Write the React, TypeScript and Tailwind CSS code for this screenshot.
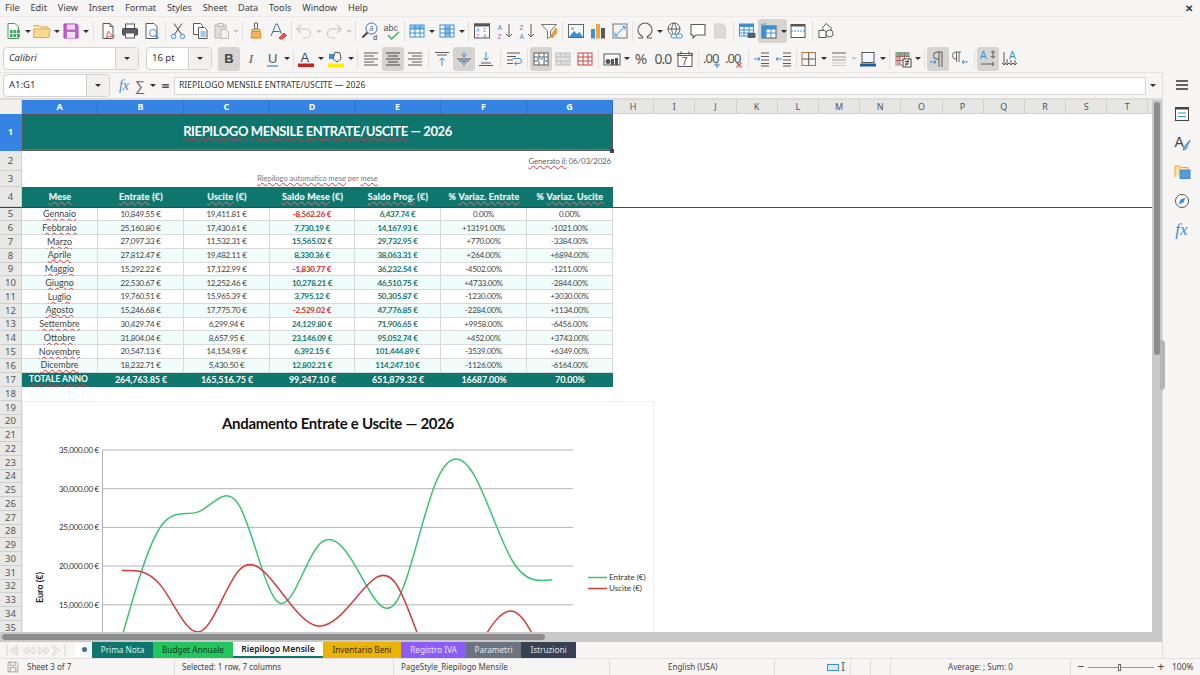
import type { ReactNode } from "react";

const UI = "font-['Noto_Sans',sans-serif]";
const CELL = "font-['Lato',sans-serif]";

const MENU = ["File", "Edit", "View", "Insert", "Format", "Styles", "Sheet", "Data", "Tools", "Window", "Help"];
const COLS = ["w-[76px]", "w-[86px]", "w-[86px]", "w-[85px]", "w-[86px]", "w-[86px]", "w-[86px]"];
const OTHER_COLS = ["H", "I", "J", "K", "L", "M", "N", "O", "P", "Q", "R", "S", "T"];

const ROWS = [
  ["Gennaio", "10,849.55 €", "19,411.81 €", "-8,562.26 €", "6,437.74 €", "0.00%", "0.00%"],
  ["Febbraio", "25,160.80 €", "17,430.61 €", "7,730.19 €", "14,167.93 €", "+13191.00%", "-1021.00%"],
  ["Marzo", "27,097.33 €", "11,532.31 €", "15,565.02 €", "29,732.95 €", "+770.00%", "-3384.00%"],
  ["Aprile", "27,812.47 €", "19,482.11 €", "8,330.36 €", "38,063.31 €", "+264.00%", "+6894.00%"],
  ["Maggio", "15,292.22 €", "17,122.99 €", "-1,830.77 €", "36,232.54 €", "-4502.00%", "-1211.00%"],
  ["Giugno", "22,530.67 €", "12,252.46 €", "10,278.21 €", "46,510.75 €", "+4733.00%", "-2844.00%"],
  ["Luglio", "19,760.51 €", "15,965.39 €", "3,795.12 €", "50,305.87 €", "-1230.00%", "+3030.00%"],
  ["Agosto", "15,246.68 €", "17,775.70 €", "-2,529.02 €", "47,776.85 €", "-2284.00%", "+1134.00%"],
  ["Settembre", "30,429.74 €", "6,299.94 €", "24,129.80 €", "71,906.65 €", "+9958.00%", "-6456.00%"],
  ["Ottobre", "31,804.04 €", "8,657.95 €", "23,146.09 €", "95,052.74 €", "+452.00%", "+3743.00%"],
  ["Novembre", "20,547.13 €", "14,154.98 €", "6,392.15 €", "101,444.89 €", "-3539.00%", "+6349.00%"],
  ["Dicembre", "18,232.71 €", "5,430.50 €", "12,802.21 €", "114,247.10 €", "-1126.00%", "-6164.00%"],
];
const HEADERS = [
  ["", "Mese", ""],
  ["", "Entrate", " (€)"],
  ["", "Uscite", " (€)"],
  ["", "Saldo Mese", " (€)"],
  ["", "Saldo Prog.", " (€)"],
  ["% ", "Variaz. Entrate", ""],
  ["% ", "Variaz. Uscite", ""],
];
const TOTALS = ["264,763.85 €", "165,516.75 €", "99,247.10 €", "651,879.32 €", "16687.00%", "70.00%"];
const TABS = [
  { label: "Prima Nota", cls: "w-[61px] bg-[#0f766e] text-[#d6efec]" },
  { label: "Budget Annuale", cls: "w-[80px] bg-[#22c55e] text-[#0b3d20]" },
  { label: "Riepilogo Mensile", cls: "w-[90px] bg-white text-[#222] font-semibold text-[8.500px] border-b-2 border-[#0f766e]" },
  { label: "Inventario Beni", cls: "w-[78px] bg-[#eab308] text-[#3a2c02]" },
  { label: "Registro IVA", cls: "w-[65px] bg-[#8b5cf6] text-[#ece4ff]" },
  { label: "Parametri", cls: "w-[55px] bg-[#6b7280] text-[#e6e8ea]" },
  { label: "Istruzioni", cls: "w-[55px] bg-[#374151] text-[#dfe3e8]" },
];

const ENTRATE = [10849.55, 25160.8, 27097.33, 27812.47, 15292.22, 22530.67, 19760.51, 15246.68, 30429.74, 31804.04, 20547.13, 18232.71];
const USCITE = [19411.81, 17430.61, 11532.31, 19482.11, 17122.99, 12252.46, 15965.39, 17775.7, 6299.94, 8657.95, 14154.98, 5430.5];
const Y_TICKS = [["35,000.00 €", 450], ["30,000.00 €", 488.7], ["25,000.00 €", 527.4], ["20,000.00 €", 566], ["15,000.00 €", 604.8]] as const;

// natural cubic spline through the monthly values, same as the chart's smooth lines
function splinePath(values: number[]) {
  const step = (552 - 122) / 11;
  const ys = values.map((v) => 566 - ((v - 20000) * 38.7) / 5000);
  const n = ys.length;
  const m = new Array(n).fill(0);
  const c = new Array(n).fill(0);
  const d = new Array(n).fill(0);
  for (let i = 1; i < n - 1; i++) {
    const rhs = (6 * (ys[i + 1] - 2 * ys[i] + ys[i - 1])) / (step * step);
    const denom = 4 - c[i - 1];
    c[i] = 1 / denom;
    d[i] = (rhs - d[i - 1]) / denom;
  }
  for (let i = n - 2; i > 0; i--) m[i] = d[i] - c[i] * m[i + 1];
  let path = `M122 ${ys[0]}`;
  for (let i = 0; i < n - 1; i++) {
    const x0 = 122 + i * step;
    const slope = (ys[i + 1] - ys[i]) / step;
    const d0 = slope - (step * (2 * m[i] + m[i + 1])) / 6;
    const d1 = slope + (step * (m[i] + 2 * m[i + 1])) / 6;
    path += ` C${x0 + step / 3} ${ys[i] + (d0 * step) / 3} ${x0 + (2 * step) / 3} ${ys[i + 1] - (d1 * step) / 3} ${x0 + step} ${ys[i + 1]}`;
  }
  return path;
}

function Ic({ children, s = 20 }: { children: ReactNode; s?: number }) {
  return (
    <svg width={s} height={s} viewBox="0 0 20 20" fill="none" stroke="#5a5a5a" strokeWidth={1}>
      {children}
    </svg>
  );
}

function B({ children, active, w = "w-[22px]" }: { children: ReactNode; active?: boolean; w?: string }) {
  return (
    <div className={`${w} h-[24px] shrink-0 flex items-center justify-center rounded-[3px] ${active ? "bg-[#d6d4d1]" : ""}`}>
      {children}
    </div>
  );
}

function Arrow({ dim }: { dim?: boolean }) {
  return <span className={`block w-0 h-0 border-x-[3px] border-t-[3px] border-x-transparent ${dim ? "border-t-[#c8c8c8]" : "border-t-[#2e2e2e]"}`} />;
}

function D({ w = "w-[8px]", dim }: { w?: string; dim?: boolean }) {
  return (
    <div className={`${w} h-[24px] shrink-0 flex items-center justify-center`}>
      <Arrow dim={dim} />
    </div>
  );
}

function S({ w }: { w: string }) {
  return (
    <div className={`${w} h-[24px] shrink-0 flex items-center justify-center`}>
      <span className="block w-px h-[20px] bg-[#e2e1df]" />
    </div>
  );
}

function GridIcon({ line = "#3b8fd6", fill, fillRow }: { line?: string; fill?: string; fillRow?: boolean }) {
  return (
    <Ic>
      <rect x="3" y="4" width="14" height="12" fill="#fff" stroke={line} />
      {fill && (fillRow ? <rect x="3" y="4" width="14" height="4" fill={fill} stroke="none" /> : <rect x="8" y="4" width="5" height="12" fill={fill} stroke="none" />)}
      <path d="M3 8h14M3 12h14M8 4v12M13 4v12" stroke={line} />
    </Ic>
  );
}

function Lines({ rows, active }: { rows: number[][]; active?: boolean }) {
  return (
    <Ic>
      {rows.map(([a, b], i) => (
        <path key={i} d={`M${a} ${4 + i * 3}H${b}`} stroke={active ? "#444" : "#5a5a5a"} />
      ))}
    </Ic>
  );
}

function VAlign({ mode }: { mode: "top" | "mid" | "bot" }) {
  return (
    <Ic>
      {mode === "top" && <path d="M3 3.500h14M5 6h10" />}
      {mode === "mid" && <path d="M3 10h14M5 12h10" />}
      {mode === "bot" && <path d="M3 16.500h14M5 14h10" />}
      {mode === "top" && <path d="M10 17V9M7.500 11.500 10 9l2.500 2.500" stroke="#3b8fd6" />}
      {mode === "mid" && <path d="M10 3v5M7.500 5.500 10 8l2.500-2.500M10 17v-4M7.500 14.500 10 12.500l2.500 2" stroke="#3b8fd6" />}
      {mode === "bot" && <path d="M10 3v8M7.500 8.500 10 11l2.500-2.500" stroke="#3b8fd6" />}
    </Ic>
  );
}

function Toolbar1() {
  return (
    <div className="h-[28px] flex items-center pl-[2px] shrink-0">
      <B><Ic><path d="M5 2.500h7l3.500 3.500v11.500H5z" fill="#fff" stroke="#3f9c5c" /><rect x="7" y="9" width="10" height="7" fill="#43a565" stroke="none" /><path d="M10 9v7M13.500 9v7M7 12.500h10" stroke="#d8f0e0" /></Ic></B>
      <D w="w-[7px]" />
      <B><Ic><path d="M2 6V4.500h5l1.500 1.500H16v2" fill="#fde3a7" stroke="#e9a63f" /><path d="M1.500 16.500 2 8h16l-1 8.500z" fill="#fcd98e" stroke="#e9a63f" /></Ic></B>
      <D w="w-[7px]" />
      <B><Ic><path d="M3 3h12.500L17 4.500V17H3z" fill="#c162cf" stroke="#a845b8" /><rect x="6" y="3.500" width="8" height="5" fill="#f4def7" stroke="none" /><rect x="6" y="11" width="8" height="6" fill="#f4def7" stroke="none" /></Ic></B>
      <D />
      <S w="w-[7px]" />
      <B><Ic><path d="M5 2.500h7l3 3v12H5z" fill="#fff" /><path d="M12 2.500v3h3" /><path d="M8 17c2-4 2-7 2.500-7s.5 4 6 5c-3 0-6 .5-8.500 2z" stroke="#d9534f" fill="none" /></Ic></B>
      <B><Ic><rect x="5.500" y="3" width="9" height="5" fill="#fff" /><rect x="2.500" y="7.500" width="15" height="6.500" rx="1" fill="#55606b" stroke="#444" /><rect x="5.500" y="12" width="9" height="5" fill="#fff" /></Ic></B>
      <B><Ic><path d="M4 2.500h8l3 3v12H4z" fill="#fff" /><circle cx="11" cy="12" r="3.500" stroke="#3b8fd6" /><path d="m13.500 14.500 3 3" stroke="#3b8fd6" strokeWidth="1.500" /></Ic></B>
      <S w="w-[4px]" />
      <B><Ic><g stroke="#3b8fd6"><circle cx="5.500" cy="15.500" r="2.200" /><circle cx="14.500" cy="15.500" r="2.200" /></g><path d="M13.500 13.500 6 2.500M6.500 13.500 14 2.500" stroke="#444" /></Ic></B>
      <B><Ic><path d="M3.500 2.500h7l2 2v9h-9z" fill="#fff" /><path d="M8.500 6.500h6l2.500 2.500v8.500H8.500z" fill="#fff" /><path d="M10.500 11h5M10.500 13h5M10.500 15h5" stroke="#3b8fd6" /></Ic></B>
      <B><Ic><g stroke="#b9b9b9"><rect x="3" y="4" width="11" height="13" fill="#ddd" /><rect x="6" y="2.500" width="5" height="3" fill="#eee" /><path d="M9 8.500h5l2.500 2.500v6.500H9z" fill="#f2f2f2" /></g></Ic></B>
      <D w="w-[6px]" dim />
      <S w="w-[6px]" />
      <B><Ic><path d="M8.500 2h3v6h-3z" stroke="#666" /><path d="M6 8.500h8v2H6z" fill="#fbd38d" stroke="#de8a2c" /><path d="M6 10.500h8l1 6.500H5z" fill="#f9b35c" stroke="#de8a2c" /></Ic></B>
      <B><Ic><path d="M3 15 8 3h1.500l4 10M5 10.500h6.500" stroke="#3b6ea5" /><path d="m11 17 5-5 2.500 2.500-4 3.500h-2.500z" fill="#e2574c" stroke="#c9433a" /></Ic></B>
      <S w="w-[4px]" />
      <B><Ic><path d="M7 4 3 8l4 4M3.500 8H12a4.500 4.500 0 0 1 0 9H9" stroke="#c9c9c9" strokeWidth="1.200" /></Ic></B>
      <D dim />
      <B><Ic><path d="m13 4 4 4-4 4M16.500 8H8a4.500 4.500 0 0 0 0 9h3" stroke="#c9c9c9" strokeWidth="1.200" /></Ic></B>
      <D w="w-[7px]" dim />
      <S w="w-[7px]" />
      <B><Ic><circle cx="11.500" cy="7.500" r="5.500" fill="#fff" stroke="#3b6ea5" /><path d="m7.500 11.500-5 5" stroke="#444" strokeWidth="2" /><text x="9" y="10" fontSize="8" fill="#3b6ea5" stroke="none">a</text><text x="13" y="18.500" fontSize="7" fill="#444" stroke="none">d</text></Ic></B>
      <B><Ic><text x="1.500" y="10" fontSize="9" fill="#555" stroke="none" fontFamily="Liberation Sans">abc</text><path d="m6 14 3.500 4L17 11" stroke="#45a864" strokeWidth="1.400" /></Ic></B>
      <S w="w-[3px]" />
      <B><GridIcon fill="#7fbbe8" fillRow /></B>
      <D />
      <B><GridIcon fill="#7fbbe8" /></B>
      <D />
      <S w="w-[5px]" />
      <B><Ic><rect x="2.500" y="3" width="15" height="14" fill="#fff" /><rect x="2.500" y="3" width="15" height="2" fill="#555" /><text x="4" y="10.500" fontSize="5.500" fill="#3b8fd6" stroke="none">A</text><text x="11" y="10.500" fontSize="5.500" fill="#c05cc9" stroke="none">Z</text><text x="4" y="16.500" fontSize="5.500" fill="#c05cc9" stroke="none">Z</text><text x="11" y="16.500" fontSize="5.500" fill="#3b8fd6" stroke="none">A</text></Ic></B>
      <div className="w-px shrink-0" />
      <B><Ic><text x="2.500" y="8.500" fontSize="7" fill="#3b8fd6" stroke="none">A</text><text x="2.500" y="18" fontSize="7" fill="#c05cc9" stroke="none">Z</text><path d="M14 3v13M11 13l3 3 3-3" /></Ic></B>
      <B><Ic><text x="2.500" y="8.500" fontSize="7" fill="#c05cc9" stroke="none">Z</text><text x="2.500" y="18" fontSize="7" fill="#3b8fd6" stroke="none">A</text><path d="M14 3v13M11 13l3 3 3-3" /></Ic></B>
      <B><Ic><path d="M2.500 3.500h15L11.500 10v6l-3 1.500V10z" fill="#fff" stroke="#777" /><path d="m17 7-5 8 1 2 4.500-5z" fill="#f0a63c" stroke="#e08e1f" /></Ic></B>
      <S w="w-[5px]" />
      <B><Ic><rect x="2.500" y="3.500" width="15" height="13" fill="#f3f8fd" stroke="#666" /><circle cx="6.500" cy="7.500" r="1.500" fill="#f0a63c" stroke="none" /><path d="m3 16 5-6 3 3 2.500-2 3.500 5z" fill="#3b8fd6" stroke="none" /></Ic></B>
      <B><Ic><rect x="3" y="8" width="4" height="9.500" fill="#3b8fd6" stroke="none" /><rect x="8" y="3" width="4" height="14.500" fill="#f0a63c" stroke="none" /><rect x="13" y="7" width="4" height="10.500" fill="#5a5a5a" stroke="none" /></Ic></B>
      <B><Ic><rect x="3" y="3" width="14" height="14" fill="#f4f4f4" stroke="#777" /><path d="M12 5.500h3v3M15 5.500 5.500 14.500M5 11.500v3.500h3" stroke="#3b8fd6" /></Ic></B>
      <S w="w-[3px]" />
      <B><Ic><path d="M3 17h4.500v-1.500C4.500 14 3 11.500 3 9a7 7 0 0 1 14 0c0 2.500-1.500 5-4.500 6.500V17H17" strokeWidth="1.100" /></Ic></B>
      <D />
      <B><Ic><circle cx="9" cy="8" r="6" fill="#fff" /><path d="M3 8h12M9 2c-3 3-3 9 0 12M9 2c3 3 3 9 0 12" /><rect x="6" y="13" width="6" height="4" rx="2" fill="#fff" stroke="#3b8fd6" /><rect x="11" y="13" width="6.500" height="4" rx="2" fill="#fff" stroke="#3b8fd6" /></Ic></B>
      <div className="w-px shrink-0" />
      <B><Ic><path d="M3 3.500h14v10.500h-9l-3 3v-3H3z" fill="#fff" strokeWidth="1.100" /></Ic></B>
      <B><Ic><path d="M4.500 3h8l3 3v11h-11z" fill="#dadada" stroke="#cfcfcf" /></Ic></B>
      <S w="w-[5px]" />
      <B><Ic><rect x="2.500" y="3" width="14" height="12" fill="#fff" stroke="#3b8fd6" /><rect x="2.500" y="3" width="14" height="3" fill="#3b8fd6" stroke="none" /><path d="M2.500 9h14M2.500 12h14M7 3v12M12 3v12" stroke="#3b8fd6" /><rect x="10.500" y="12" width="8" height="5" rx="1" fill="#55606b" stroke="none" /></Ic></B>
      <div className="flex rounded-[3px] bg-[#d6d4d1]">
        <B><Ic><rect x="3" y="5" width="14" height="12" fill="#fff" stroke="#555" /><rect x="3" y="5" width="14" height="3.500" fill="#3b8fd6" stroke="none" /><rect x="3" y="5" width="4" height="12" fill="#3b8fd6" stroke="none" /><path d="M3 12h14M7 8v9M12 8v9" stroke="#3b8fd6" /><path d="M2 3l3 2M6 2v2" stroke="#3b8fd6" /></Ic></B>
        <D w="w-[7px]" />
      </div>
      <B><Ic><rect x="3" y="3.500" width="14" height="13" fill="#fff" stroke="#555" /><rect x="3" y="3.500" width="14" height="2" fill="#555" stroke="none" /><path d="M3 10h14" stroke="#3b8fd6" strokeDasharray="2 1" /></Ic></B>
      <S w="w-[6px]" />
      <B><Ic><rect x="3" y="9.500" width="7" height="7" fill="#fff" /><path d="m10 2.500 6 5-5 4-5-4z" fill="#fff" /><circle cx="13.500" cy="12.500" r="3.500" fill="#fff" /></Ic></B>
    </div>
  );
}

function Toolbar2() {
  return (
    <div className={`h-[27px] flex items-center pl-[3px] shrink-0 ${UI}`}>
      <div className="w-[136px] h-[23px] flex bg-white border border-[#d3d2d0] rounded-[4px] text-[9.500px] text-[#333] overflow-hidden">
        <span className="flex-1 flex items-center pl-[5px] italic">Calibri</span>
        <span className="w-[23px] flex items-center justify-center bg-[#f1f0ee] border-l border-[#d3d2d0]"><Arrow /></span>
      </div>
      <div className="w-[7px] shrink-0" />
      <div className="w-[66px] h-[23px] flex bg-white border border-[#d3d2d0] rounded-[4px] text-[9.500px] text-[#333] overflow-hidden">
        <span className="flex-1 flex items-center pl-[5px]">16 pt</span>
        <span className="w-[23px] flex items-center justify-center bg-[#f1f0ee] border-l border-[#d3d2d0]"><Arrow /></span>
      </div>
      <div className="w-[6px] shrink-0" />
      <B active><span className="text-[13px] font-bold text-[#444] font-['Liberation_Sans',sans-serif]">B</span></B>
      <B><span className="text-[13px] italic text-[#555] font-['Liberation_Serif',serif]">I</span></B>
      <B w="w-[21px]"><Ic><text x="5" y="14" fontSize="13" fill="#555" stroke="none" fontFamily="Liberation Sans">U</text><path d="M4 17h11" stroke="#3b8fd6" strokeWidth="1.300" /></Ic></B>
      <D />
      <S w="w-[4px]" />
      <B><Ic><text x="4.500" y="13" fontSize="13" fill="#444" stroke="none" fontFamily="Liberation Sans">A</text><rect x="2" y="14.500" width="16" height="3.500" fill="#c9211e" stroke="none" /></Ic></B>
      <D />
      <B><Ic><path d="M3 5h7v5H3z" fill="#3b8fd6" stroke="none" /><path d="m9 3 5 1 1 6-4 3-4-3z" fill="#fff" stroke="#555" /><rect x="2" y="14.500" width="16" height="3.500" fill="#fff200" stroke="none" /></Ic></B>
      <D />
      <S w="w-[5px]" />
      <B><Lines rows={[[3, 17], [3, 13], [3, 17], [3, 13], [3, 17]]} /></B>
      <B active><Lines active rows={[[3, 17], [5, 15], [3, 17], [5, 15], [3, 17]]} /></B>
      <B><Lines rows={[[3, 17], [7, 17], [3, 17], [7, 17], [3, 17]]} /></B>
      <S w="w-[5px]" />
      <B><VAlign mode="top" /></B>
      <B active><VAlign mode="mid" /></B>
      <B><VAlign mode="bot" /></B>
      <S w="w-[6px]" />
      <B><Ic><path d="M3 4h13M3 7.500h9M3 11h6M3 14.500h6" /><path d="M9 9.500h6a2.500 2.500 0 0 1 0 5H11m1.500-2-2 2 2 2" stroke="#3b8fd6" /></Ic></B>
      <S w="w-[5px]" />
      <B active><Ic><rect x="3" y="4" width="14" height="12" fill="#fff" /><path d="M3 8h14M3 12h4M13 12h4M8 4v4M13 4v4M8 12v4M13 12v4" /><path d="M6 10h8M7.500 8.500 6 10l1.500 1.500M12.500 8.500 14 10l-1.500 1.500" stroke="#3b8fd6" /></Ic></B>
      <B><Ic><rect x="3" y="4" width="14" height="12" fill="#e3e3e3" stroke="#bbb" /><path d="M3 8h14M3 12h14M8 4v4M13 4v4M8 12v4M13 12v4" stroke="#bbb" /></Ic></B>
      <B><Ic><rect x="3" y="4" width="14" height="12" fill="#fff" stroke="#c9453f" /><path d="M3 8h14M8 4v12M13 4v12M3 12h14" stroke="#c9453f" /></Ic></B>
      <S w="w-[5px]" />
      <B><Ic><rect x="2" y="5" width="16" height="11" fill="#fff" stroke="#555" /><circle cx="6" cy="12.500" r="2.500" fill="#555" stroke="none" /><rect x="9" y="10" width="3" height="6" fill="#555" stroke="none" /><rect x="13" y="9" width="3" height="7" fill="#555" stroke="none" /></Ic></B>
      <D w="w-[7px]" />
      <B><span className="text-[15px] text-[#555] leading-none">%</span></B>
      <B><span className="text-[14px] text-[#555] leading-none tracking-[-1px]">0.0</span></B>
      <B><Ic><rect x="3" y="4.500" width="14" height="13" fill="#fff" /><path d="M3 4.500h14v2H3zM6 2.500v3M14 2.500v3" strokeWidth="1.200" /><text x="7" y="16" fontSize="10" fill="#444" stroke="none" fontFamily="Liberation Sans">7</text></Ic></B>
      <S w="w-[5px]" />
      <B><Ic><text x="1" y="14" fontSize="13" fill="#555" stroke="none" letterSpacing="-1">.00</text><path d="M15 13v6M12 16h6" stroke="#3b8fd6" strokeWidth="1.200" /></Ic></B>
      <B><Ic><text x="1" y="14" fontSize="13" fill="#555" stroke="none" letterSpacing="-1">.00</text><path d="m12.500 13.500 5 5M17.500 13.500l-5 5" stroke="#d9534f" strokeWidth="1.200" /></Ic></B>
      <S w="w-[6px]" />
      <B><Ic><path d="M9 4h8M9 7.500h8M9 11h8M9 14.500h8M9 17h8" /><path d="M2 10h6M6 8l2 2-2 2" stroke="#3b8fd6" /></Ic></B>
      <B><Ic><path d="M9 4h8M9 7.500h8M9 11h8M9 14.500h8M9 17h8" /><path d="M8 10H2M4 8l-2 2 2 2" stroke="#3b8fd6" /></Ic></B>
      <S w="w-[3px]" />
      <B><Ic><rect x="3" y="3.500" width="13.500" height="13" stroke="#b9763a" /><path d="M9.750 3.500v13M3 10h13.500" stroke="#555" /></Ic></B>
      <D />
      <B><Ic><path d="M3 4h14" stroke="#aaa" strokeWidth="2" /><path d="M3 8h14M3 11h14" stroke="#bbb" strokeWidth="1.300" /><path d="M3 14h14M3 16.500h14" stroke="#ccc" /></Ic></B>
      <D w="w-[7px]" dim />
      <B><Ic><rect x="4" y="3.500" width="12" height="10" fill="#f4f7fb" stroke="#555" /><rect x="2" y="14.500" width="16" height="3" fill="#1d5fa6" stroke="none" /></Ic></B>
      <D />
      <S w="w-[5px]" />
      <B><Ic><rect x="3" y="3.500" width="13" height="12.500" fill="#fff" stroke="#888" /><rect x="3" y="3.500" width="13" height="4" fill="#79b784" stroke="none" /><rect x="3" y="7.500" width="4" height="8" fill="#e9a39e" stroke="none" /><path d="M3 7.500h13M3 11.500h13M7 3.500v12.500M11.500 3.500v12.500" stroke="#a66" /><rect x="10" y="10" width="8" height="8" fill="#fff" stroke="#444" /><path d="M12 12.500h4M12 15h4M15.500 11l-3 6" stroke="#444" /></Ic></B>
      <D />
      <S w="w-[5px]" />
      <B active><Ic><path d="M14 3v15M11 3v15M14 3H9a3.500 3.500 0 0 0 0 7h2" /><path d="M2 13h6M6 11l2 2-2 2" stroke="#3b8fd6" /></Ic></B>
      <B><Ic><path d="M9 3v10M6.500 3v10M11 3H6a3.500 3.500 0 0 0 0 7h1" stroke="#666" /><path d="M18 13h-6M14 11l-2 2 2 2" stroke="#3b8fd6" /></Ic></B>
      <S w="w-[6px]" />
      <B active><Ic><text x="2" y="10" fontSize="10" fill="#3b8fd6" stroke="none" fontFamily="Liberation Sans">A</text><path d="M13 3h4M15 1.500V9M13 7l2 2 2-2M3 15h13M14 13l2 2-2 2" /></Ic></B>
      <B><Ic><text x="9" y="10" fontSize="10" fill="#3b8fd6" stroke="none" fontFamily="Liberation Sans">A</text><path d="M4 3v13M2 14l2 2 2-2M7 10v6M5 14l2 2 2-2M11 11v5M9 14l2 2 2-2M15 11v5M13 14l2 2 2-2" /></Ic></B>
    </div>
  );
}

function FormulaBar() {
  return (
    <div className={`h-[26px] flex items-center pl-[3px] shrink-0 border-t border-[#e6e5e3] ${UI}`}>
      <div className="w-[107px] h-[23px] flex bg-white border border-[#d3d2d0] rounded-[4px] text-[9.500px] text-[#333] overflow-hidden">
        <span className="flex-1 flex items-center pl-[5px]">A1:G1</span>
        <span className="w-[23px] flex items-center justify-center bg-[#f1f0ee] border-l border-[#d3d2d0]"><Arrow /></span>
      </div>
      <div className="w-[3px] shrink-0" />
      <span className="w-[22px] text-center text-[14px] italic text-[#3b8fd6] font-['Liberation_Serif',serif] shrink-0">fx</span>
      <span className="w-[10px] text-center text-[14px] text-[#666] shrink-0">∑</span>
      <D w="w-[16px]" />
      <span className="w-[9px] text-center text-[14px] text-[#555] font-bold shrink-0 leading-none">=</span>
      <div className="w-[4px] shrink-0" />
      <div className="w-[972px] h-[18px] bg-white border border-[#d8d7d5] flex items-center pl-[4px] text-[8.600px] text-[#333] shrink-0">
        RIEPILOGO MENSILE ENTRATE/USCITE — 2026
      </div>
      <D w="w-[14px]" />
    </div>
  );
}

function RowHead({ n, selected, h }: { n: number; selected?: boolean; h: string }) {
  return (
    <div className={`w-[22px] ${h} shrink-0 flex items-center justify-center pt-px text-[9.500px] border-b border-r ${UI} ${selected ? "bg-[#3584e4] text-white font-bold border-[#3584e4]" : "bg-[#e8e8e6] text-[#555] border-[#cfcfcd]"}`}>
      {n}
    </div>
  );
}

function Wavy({ children }: { children: ReactNode }) {
  return <span className="underline decoration-wavy decoration-[#d9363e] decoration-1 underline-offset-[1px]">{children}</span>;
}

function cellColor(col: number, value: string) {
  if (col === 3) return value.startsWith("-") ? "text-[#dc2626] font-bold" : "text-[#0f766e] font-bold";
  if (col === 4) return "text-[#0f766e] font-bold";
  return "text-[#444]";
}

function Sheet() {
  return (
    <div className={`relative h-[532px] w-[1152px] overflow-hidden bg-white ${CELL}`}>
      <div className={`h-[14px] flex text-[9px] ${UI}`}>
        <div className="w-[22px] shrink-0 bg-[#f1f0ee] border-r border-[#cfcfcd]" />
        {COLS.map((w, i) => (
          <div key={w + i} className={`${w} shrink-0 flex items-center justify-center bg-[#3584e4] text-white font-bold border-r border-[#2f74c9]`}>
            {"ABCDEFG"[i]}
          </div>
        ))}
        {OTHER_COLS.map((c) => (
          <div key={c} className="w-[41.200px] shrink-0 flex items-center justify-center bg-[#e6e6e4] text-[#555] border-r border-b border-[#cfcfcd]">
            {c}
          </div>
        ))}
        <div className="flex-1 bg-[#e6e6e4] border-b border-[#cfcfcd]" />
      </div>

      <div className="flex">
        <RowHead n={1} selected h="h-[37px]" />
        <div className="relative w-[591px] h-[37px] pb-[1px] bg-[#0f766e] border border-white border-b-2 border-b-[#777] outline-1 outline-[#555] -outline-offset-1 flex items-center justify-center text-white font-bold text-[13px] tracking-[-0.4px]">
          <Wavy>RIEPILOGO</Wavy>&nbsp;<Wavy>MENSILE</Wavy>&nbsp;<Wavy>ENTRATE/USCITE</Wavy>&nbsp;— 2026
        </div>
      </div>
      <div className="flex">
        <RowHead n={2} h="h-[20px]" />
        <div className="w-[591px] h-[20px] flex items-center justify-end pr-[2px] text-[8px] tracking-[-0.2px] text-[#666]">
          <Wavy>Generato il:</Wavy>&nbsp;06/03/2026
        </div>
      </div>
      <div className="flex">
        <RowHead n={3} h="h-[16px]" />
        <div className="w-[591px] h-[16px] flex items-center justify-center text-[7.500px] text-[#777]">
          <Wavy>Riepilogo automatico mese</Wavy>&nbsp;per&nbsp;<Wavy>mese</Wavy>
        </div>
      </div>
      <div className="flex h-[20.500px] border-b border-[#444]">
        <RowHead n={4} h="h-[20px]" />
        {HEADERS.map(([before, word, after], i) => (
          <div key={word} className={`${COLS[i]} shrink-0 h-[20px] flex items-center justify-center whitespace-pre bg-[#0f766e] text-[#e8f5f3] font-bold text-[9px] tracking-[0.2px] [text-shadow:0_0_1px_rgba(255,255,255,0.5)]`}>
            {before}
            <span className="underline decoration-wavy decoration-[#d9363e]/50 decoration-1 underline-offset-[1px]">{word}</span>
            {after}
          </div>
        ))}
      </div>
      {ROWS.map((row, r) => (
        <div key={row[0]} className="flex">
          <RowHead n={r + 5} h="h-[13.750px]" />
          {row.map((value, c) => (
            <div key={c} className={`${COLS[c]} shrink-0 h-[13.750px] flex items-center justify-center border-r border-b border-[#d9d9d9] ${c === 0 ? "text-[9px]" : "text-[8px] tracking-[-0.25px]"} ${r % 2 === 1 ? "bg-[#f0fdfa]" : "bg-white"} ${cellColor(c, value)}`}>
              {c === 0 ? <Wavy>{value}</Wavy> : value}
            </div>
          ))}
        </div>
      ))}
      <div className="flex">
        <RowHead n={17} h="h-[14.500px]" />
        <div className="w-[76px] shrink-0 h-[14.500px] flex items-center pl-[7px] bg-[#0f766e] text-white font-bold text-[8.500px]">
          <Wavy>TOTALE ANNO</Wavy>
        </div>
        {TOTALS.map((t, i) => (
          <div key={t} className={`${COLS[i + 1]} shrink-0 h-[14.500px] flex items-center justify-center bg-[#0f766e] text-white font-bold text-[9px] tracking-[-0.1px]`}>
            {t}
          </div>
        ))}
      </div>
      {Array.from({ length: 18 }, (_, i) => (
        <RowHead key={i} n={i + 18} h="h-[13.750px]" />
      ))}

      {/* selection handle, chart object: both float over the cells */}
      <div className="absolute left-[610px] top-[48.500px] w-[4px] h-[4px] bg-[#444]" />
      <Chart />
    </div>
  );
}

function Chart() {
  return (
    <div className="absolute left-[22px] top-[301px] w-[632px] h-[240px] bg-white border border-[#eeeeee]">
      <svg width="632" height="240" viewBox="22 401 632 240" fill="none" className="absolute -left-px -top-px">
        <path d="M102.500 450V640" stroke="#b3b3b3" />
        {Y_TICKS.map(([label, y]) => (
          <g key={label}>
            <path d={`M102 ${y}H573`} stroke="#b3b3b3" />
            <text x="99" y={y + 3} textAnchor="end" fontSize="8" letterSpacing="-0.25" fill="#333" fontFamily="Lato, sans-serif">{label}</text>
          </g>
        ))}
        <text x="338" y="429" textAnchor="middle" fontSize="15" letterSpacing="-0.3" fontWeight="700" fill="#111" fontFamily="Lato, sans-serif">Andamento Entrate e Uscite — 2026</text>
        <text transform="translate(43 603) rotate(-90)" fontSize="9" fontWeight="700" fill="#222" fontFamily="Lato, sans-serif">Euro (€)</text>
        <path d={splinePath(ENTRATE)} stroke="#3cc273" strokeWidth="1.500" />
        <path d={splinePath(USCITE)} stroke="#d23c3c" strokeWidth="1.500" />
        <path d="M588 577.500h19" stroke="#3cc273" strokeWidth="1.500" />
        <path d="M588 588.500h19" stroke="#d23c3c" strokeWidth="1.500" />
        <text x="609" y="580" fontSize="8" fill="#333" fontFamily="Lato, sans-serif">Entrate (€)</text>
        <text x="609" y="591" fontSize="8" fill="#333" fontFamily="Lato, sans-serif">Uscite (€)</text>
      </svg>
    </div>
  );
}

function Sidebar() {
  return (
    <div className="w-[38px] shrink-0 border-l border-[#dddcda] flex flex-col items-center pt-[3px] gap-[9px]">
      <Ic><path d="M4 6h12M4 10h12M4 14h12" stroke="#333" strokeWidth="1.500" /></Ic>
      <Ic><rect x="3.500" y="3.500" width="13" height="13" fill="#fff" stroke="#444" /><rect x="3.500" y="3.500" width="13" height="2" fill="#444" stroke="none" /><path d="M6 9h8M6 12.500h8" stroke="#3b8fd6" /></Ic>
      <Ic><text x="2.500" y="14" fontSize="14" fill="#444" stroke="none" fontFamily="Liberation Sans">A</text><path d="M18 7 12 14l-1 3 3-1z" fill="#7fb7e6" stroke="#3b8fd6" /></Ic>
      <Ic><path d="M3 15V4h5l1 1.500h7V9" fill="#fde3a7" stroke="#e9a63f" /><rect x="8" y="8" width="10" height="8.500" fill="#5b9bd5" stroke="#3b8fd6" /></Ic>
      <Ic><circle cx="10" cy="10" r="6.500" fill="#fff" stroke="#555" /><path d="m13.500 6.500-5 2-2 5 5-2z" fill="#3b8fd6" stroke="none" /></Ic>
      <span className="text-[17px] leading-[20px] italic text-[#3b8fd6] font-['Liberation_Serif',serif]">fx</span>
    </div>
  );
}

function TabBar() {
  return (
    <div className={`h-[16px] flex items-center text-[8.200px] shrink-0 ${UI}`}>
      <div className="w-[72px] shrink-0 flex items-center pl-[6px]">
        <svg width="60" height="13" viewBox="0 0 60 13" fill="none" stroke="#d4d4d2">
          <path d="M1 1v11M11 1.500 4 6.500l7 5v-2.500l-3.500-2.500L11 4zM13 4l-3.500 2.500L13 9" />
          <path d="M22 3v7l-4.500-3.500zM28 3v7l-4.500-3.500z" />
          <path d="M33 3v7l4.500-3.500zM39 3v7l4.500-3.500z" />
          <path d="M47 1.500l7 5-7 5V9l3.500-2.500L47 4zM59 1v11" />
        </svg>
      </div>
      <div className="w-[20px] shrink-0 flex items-center pl-[3px]">
        <div className="w-[11px] h-[14px] bg-white relative"><span className="absolute left-[7px] top-[4px] w-[5px] h-[5px] rounded-full bg-[#3b6ea5]" /></div>
      </div>
      {TABS.map((t) => (
        <div key={t.label} className={`${t.cls} h-[16px] flex items-center justify-center whitespace-nowrap shrink-0`}>
          {t.label}
        </div>
      ))}
    </div>
  );
}

function StatusBar() {
  const cell = "flex items-center h-[17px] border-r border-[#e0dfdd] shrink-0 text-[8px] text-[#444]";
  return (
    <div className={`h-[17px] flex items-center shrink-0 border-t border-[#e3e2e0] ${UI}`}>
      <div className={`${cell} w-[175px]`}>
        <span className="w-[25px] flex justify-center"><Ic s={14}><path d="M3 3h12l2 2v12H3z" stroke="#888" /><path d="M6 3v5h7V3M6 17v-6h8v6" stroke="#888" /></Ic></span>
        <span className="pl-[2px]">Sheet 3 of 7</span>
      </div>
      <div className={`${cell} w-[219px] pl-[7px]`}>Selected: 1 row, 7 columns</div>
      <div className={`${cell} w-[216px] pl-[7px]`}>PageStyle_Riepilogo Mensile</div>
      <div className={`${cell} w-[165px] pl-[58px]`}>English (USA)</div>
      <div className={`${cell} w-[76px] pl-[52px] gap-[2px]`}>
        <span className="w-[12px] h-[7px] bg-[#d7e8f6] border border-[#3b8fd6] shrink-0" />
        <span className="text-[12px] text-[#666] leading-none">I</span>
      </div>
      <div className={`${cell} w-[20px]`} />
      <div className={`${cell} w-[20px]`} />
      <div className={`${cell} w-[180px] justify-center`}>Average: ; Sum: 0</div>
      <div className="flex items-center w-[129px] shrink-0 pl-[5px] text-[#444]">
        <span className="w-[10px] text-center text-[12px] leading-none">−</span>
        <div className="relative w-[66px] h-px bg-[#999] mx-[2px]">
          <span className="absolute left-[30px] top-[-3px] w-[3px] h-[7px] bg-white border border-[#666]" />
        </div>
        <span className="w-[10px] text-center text-[12px] leading-none">+</span>
        <span className="ml-[6px] text-[8.500px]">100%</span>
      </div>
    </div>
  );
}

export default function App() {
  return (
    <div className={`relative w-[1200px] h-[675px] overflow-hidden flex flex-col bg-[#f6f5f4] ${UI}`}>
      <div className="h-[16px] flex items-center shrink-0 pl-[5px] pr-[5px] gap-[10.800px] text-[9.200px] text-[#3d3d3d]">
        {MENU.map((m) => (
          <span key={m}>{m}</span>
        ))}
        <span className="ml-auto text-[10px] font-bold text-[#333] pr-[2px]">✕</span>
      </div>
      <div className="border-t border-[#eceae8] mr-[16px]" />
      <Toolbar1 />
      <Toolbar2 />
      <div className="flex flex-1 min-h-0">
        <div className="w-[1162px] shrink-0 flex flex-col">
          <FormulaBar />
          <div className="h-[2px] shrink-0 bg-[#dddcda]" />
          <div className="flex">
            <Sheet />
            <div className="w-[10px] h-[532px] bg-[#c9c9c9] pt-[2px] flex justify-center">
              <div className="w-[6px] h-[253px] rounded-full bg-[#8c8c8c]" />
            </div>
          </div>
          <div className="h-[10px] shrink-0 bg-[#c9c9c9] flex items-center pl-[2px]">
            <div className="w-[543px] h-[6px] rounded-full bg-[#8c8c8c]" />
          </div>
          <TabBar />
        </div>
        <Sidebar />
      </div>
      <StatusBar />
      <div className="absolute left-[1160px] top-[340px] w-[5px] h-[50px] bg-[#b5b5b5] rounded-r-sm" />
    </div>
  );
}
